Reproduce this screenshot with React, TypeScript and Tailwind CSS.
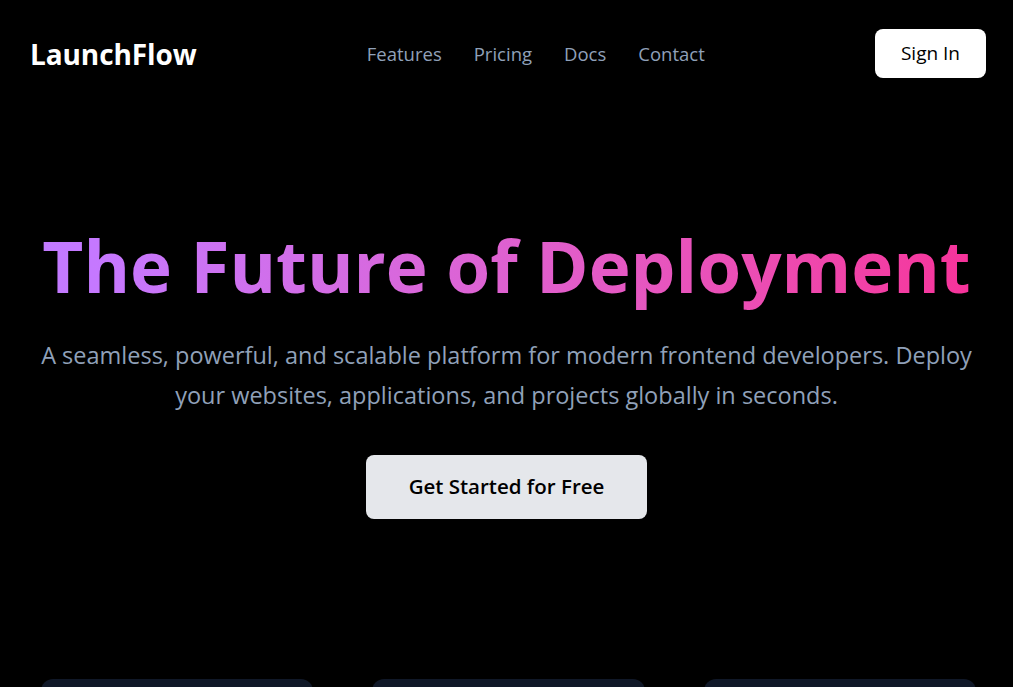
import React from "react";

export default function App() {
  return (
    <div className="min-h-screen bg-black text-white">
      <div className="font-['Open_Sans','Noto_Sans',sans-serif]">
        <nav className="flex items-center justify-between pl-[30px] pr-[27px] pt-[29px] pb-[20px]">
          <div className="text-[28px] font-bold tracking-[-0.1px] text-white">LaunchFlow</div>
          <div className="flex items-center gap-[32px] text-[18.5px] text-slate-400">
            <a>Features</a>
            <a>Pricing</a>
            <a>Docs</a>
            <a>Contact</a>
          </div>
          <button className="h-[49px] w-[111px] rounded-lg bg-white text-[19px] text-black">Sign In</button>
        </nav>
        <main className="flex flex-col items-center px-8 text-center">
          <h1 className="mt-[124px] bg-gradient-to-r from-purple-400 to-pink-500 bg-clip-text text-[71px] font-bold leading-tight text-transparent">
            The Future of Deployment
          </h1>
          <p className="mt-[24px] max-w-[950px] text-[23.5px] leading-[40px] text-slate-400">
            A seamless, powerful, and scalable platform for modern frontend developers. Deploy your websites, applications, and projects globally in seconds.
          </p>
          <button className="mt-[40px] h-[64px] w-[281px] rounded-lg bg-gray-200 text-[20.5px] font-semibold text-black">
            Get Started for Free
          </button>
        </main>
        <section className="mt-[160px] grid grid-cols-3 gap-[59px] px-[41px] pr-[37px]">
          <div className="h-[200px] rounded-xl bg-gray-900"></div>
          <div className="h-[200px] rounded-xl bg-gray-900"></div>
          <div className="h-[200px] rounded-xl bg-gray-900"></div>
        </section>
      </div>
    </div>
  );
}
